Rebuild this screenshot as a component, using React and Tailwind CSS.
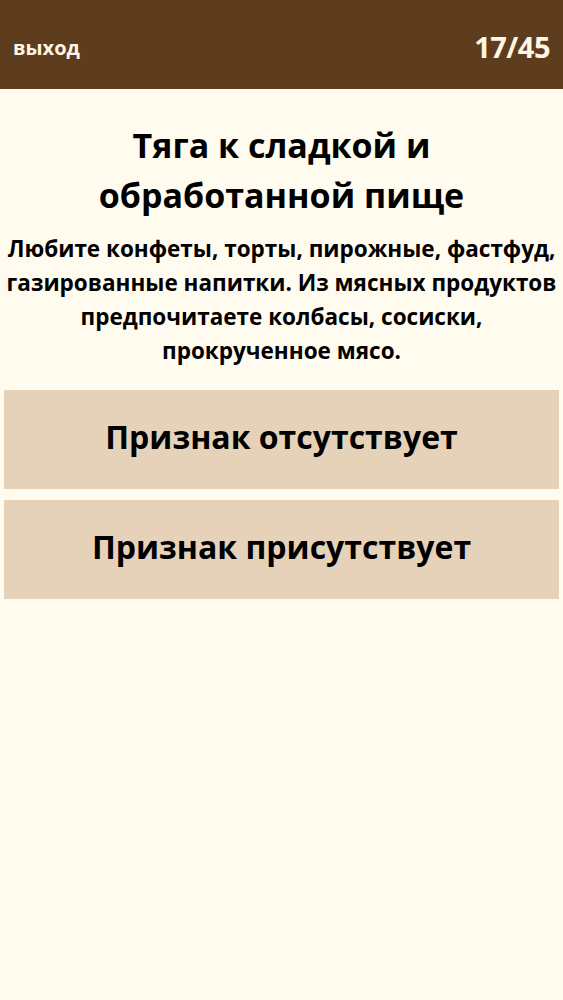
const answers = ["Признак отсутствует", "Признак присутствует"];

const App = () => {
  return (
    <div
      className="min-h-[1000px] bg-[#fffbef] text-black"
      style={{ fontFamily: "'Open Sans', 'Noto Sans', sans-serif" }}
    >
      <div className="flex items-center justify-between h-[89px] bg-[#5e3d1f] pl-[13px] pr-[13px]">
        <span className="text-[20px] font-bold text-[#fff6e6] pt-[7px]">выход</span>
        <span className="text-[29px] font-bold text-[#fff6e6] pt-[5px] tracking-[-0.5px]">17/45</span>
      </div>
      <div className="flex flex-col items-center px-[4px] pt-[31px]">
        <h1 className="text-[34px] font-bold leading-[50px] text-center">
          Тяга к сладкой и
          <br />
          обработанной пище
        </h1>
        <p className="text-[22.5px] font-bold leading-[34px] text-center mt-[12px]">
          Любите конфеты, торты, пирожные, фастфуд, газированные напитки. Из мясных продуктов
          предпочитаете колбасы, сосиски, прокрученное мясо.
        </p>
      </div>
      <div className="flex flex-col gap-[11px] px-[4px] mt-[22px]">
        {answers.map((a) => (
          <button
            key={a}
            className="h-[99px] bg-[#e6d2b8] flex items-center justify-center text-[32px] font-bold pb-[6px]"
          >
            {a}
          </button>
        ))}
      </div>
    </div>
  );
};

export default App;
